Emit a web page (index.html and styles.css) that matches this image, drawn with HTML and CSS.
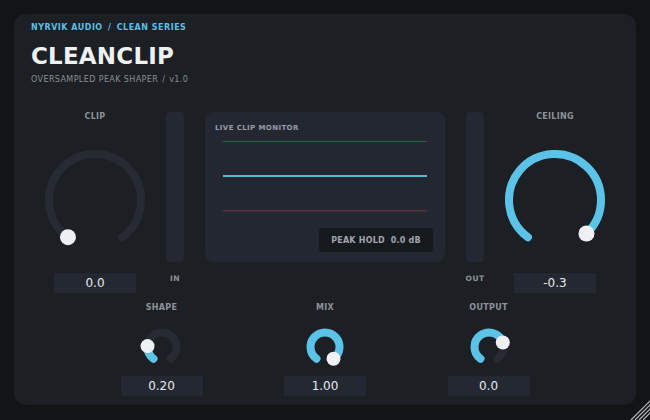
FILE: index.html
```html
<!DOCTYPE html>
<html>
<head>
<meta charset="utf-8">
<link rel="stylesheet" href="styles.css">
</head>
<body>
<div class="panel">
  <header class="head">
    <div class="brand">NYRVIK AUDIO <span class="sep">/</span> CLEAN SERIES</div>
    <h1 class="title">CLEANCLIP</h1>
    <div class="subtitle">OVERSAMPLED PEAK SHAPER <span class="sep2">/</span> v1.0</div>
  </header>

  <section class="top-row">
    <div class="knob-col">
      <div class="label">CLIP</div>
      <svg class="knob-big" width="100" height="100" viewBox="0 0 100 100">
        <path class="track" d="M22.96 87.21 A46 46 0 1 1 77.04 87.21" stroke-width="8"/>
        <circle class="dot" cx="22.96" cy="87.21" r="8"/>
      </svg>
      <div class="value">0.0</div>
    </div>

    <div class="meter-col">
      <div class="meter"></div>
      <div class="meter-label">IN</div>
    </div>

    <div class="monitor">
      <div class="mon-label">LIVE CLIP MONITOR</div>
      <svg class="scope" width="204" height="80" viewBox="0 0 204 80">
        <line class="limit" x1="0" y1="5.5" x2="204" y2="5.5"/>
        <line class="signal" x1="0" y1="40" x2="204" y2="40"/>
        <line class="limit" x1="0" y1="74.8" x2="204" y2="74.8"/>
      </svg>
      <div class="peak">PEAK HOLD<span class="peak-val">0.0 dB</span></div>
    </div>

    <div class="meter-col">
      <div class="meter"></div>
      <div class="meter-label">OUT</div>
    </div>

    <div class="knob-col">
      <div class="label">CEILING</div>
      <svg class="knob-big" width="100" height="100" viewBox="0 0 100 100">
        <path class="track" d="M22.96 87.21 A46 46 0 1 1 77.04 87.21" stroke-width="8"/>
        <path class="active" d="M22.96 87.21 A46 46 0 1 1 81.49 83.53" stroke-width="8"/>
        <circle class="dot" cx="81.49" cy="83.53" r="8"/>
      </svg>
      <div class="value">-0.3</div>
    </div>
  </section>

  <section class="bottom-row">
    <div class="knob-col small">
      <div class="label">SHAPE</div>
      <svg class="knob-small" width="48" height="48" viewBox="0 0 48 48">
        <path class="track" d="M15.48 35.73 A14.5 14.5 0 1 1 32.52 35.73" stroke-width="8"/>
        <path class="active" d="M15.48 35.73 A14.5 14.5 0 0 1 9.53 23.09" stroke-width="8"/>
        <circle class="dot" cx="9.53" cy="23.09" r="7"/>
      </svg>
      <div class="value">0.20</div>
    </div>
    <div class="knob-col small">
      <div class="label">MIX</div>
      <svg class="knob-small" width="48" height="48" viewBox="0 0 48 48">
        <path class="active" d="M15.48 35.73 A14.5 14.5 0 1 1 32.52 35.73" stroke-width="8"/>
        <circle class="dot" cx="32.52" cy="35.73" r="7"/>
      </svg>
      <div class="value">1.00</div>
    </div>
    <div class="knob-col small">
      <div class="label">OUTPUT</div>
      <svg class="knob-small" width="48" height="48" viewBox="0 0 48 48">
        <path class="track" d="M15.48 35.73 A14.5 14.5 0 1 1 32.52 35.73" stroke-width="8"/>
        <path class="active" d="M15.48 35.73 A14.5 14.5 0 1 1 37.79 19.52" stroke-width="8"/>
        <circle class="dot" cx="37.79" cy="19.52" r="7"/>
      </svg>
      <div class="value">0.0</div>
    </div>
  </section>
</div>

<svg class="grip" width="20" height="20" viewBox="0 0 20 20">
  <line x1="1" y1="20" x2="21" y2="0"/>
  <line x1="5" y1="20" x2="21" y2="4"/>
  <line x1="9" y1="20" x2="21" y2="8"/>
  <line x1="13" y1="20" x2="21" y2="12"/>
</svg>
</body>
</html>
```

FILE: styles.css
```css
html, body {
  margin: 0;
  padding: 0;
}
body {
  background: #131416;
  width: 650px;
  height: 420px;
  overflow: hidden;
  position: relative;
  font-family: "DejaVu Sans", Verdana, sans-serif;
}
.panel {
  margin: 14px;
  width: 622px;
  height: 391px;
  box-sizing: border-box;
  padding: 9px 17px 0;
  background: #1c1f23;
  border-radius: 12px;
  display: flex;
  flex-direction: column;
}
.head {
  display: flex;
  flex-direction: column;
}
.brand {
  font-size: 8px;
  line-height: 10px;
  font-weight: bold;
  letter-spacing: 0.5px;
  color: #5bbfe6;
}
.sep {
  margin: 0 2px;
}
.title {
  margin: 8.5px 0 0;
  font-size: 23px;
  line-height: 28px;
  font-weight: bold;
  color: #eef0f2;
  letter-spacing: 0.2px;
}
.subtitle {
  margin-top: 5.8px;
  font-size: 8px;
  line-height: 10px;
  letter-spacing: 0.4px;
  color: #8a9098;
}
.sep2 {
  margin: 0 1px;
}
.top-row {
  margin-top: 25px;
  display: grid;
  grid-template-columns: 100px 18px 240px 18px 100px;
  column-gap: 21px;
  justify-content: center;
  align-items: start;
}
.knob-col {
  display: flex;
  flex-direction: column;
  align-items: center;
}
.label {
  padding-top: 2px;
  font-size: 8px;
  line-height: 10px;
  font-weight: bold;
  letter-spacing: 0.3px;
  color: #8d939b;
}
.knob-big {
  display: block;
  margin-top: 27.7px;
  overflow: visible;
}
.track {
  fill: none;
  stroke: #262a33;
  stroke-linecap: round;
}
.active {
  fill: none;
  stroke: #5cc3e8;
  stroke-linecap: round;
}
.dot {
  fill: #eef1f3;
}
.value {
  width: 82px;
  height: 20px;
  background: #242832;
  color: #e8eaec;
  font-size: 12px;
  line-height: 21px;
  text-align: center;
  overflow: hidden;
}
.knob-big + .value {
  margin-top: 23px;
}
.meter-col {
  display: flex;
  flex-direction: column;
  align-items: center;
}
.meter {
  margin-top: 1.7px;
  width: 18px;
  height: 150px;
  border-radius: 4px;
  background: #242832;
}
.meter-label {
  margin-top: 12px;
  font-size: 7.5px;
  line-height: 10px;
  font-weight: bold;
  letter-spacing: 0.4px;
  color: #8d939b;
}
.monitor {
  margin-top: 1.7px;
  height: 150px;
  box-sizing: border-box;
  padding: 12px 12px 10px 10px;
  background: #222731;
  border-radius: 8px;
  display: flex;
  flex-direction: column;
}
.mon-label {
  font-size: 7px;
  line-height: 9px;
  font-weight: bold;
  letter-spacing: 0.4px;
  color: #979da5;
}
.scope {
  display: block;
  margin: 3px 0 0 8px;
}
.limit {
  stroke: #74393f;
  stroke-width: 1;
}
.signal {
  stroke: #5ab9dd;
  stroke-width: 2;
}
.peak {
  margin-top: 12px;
  align-self: flex-end;
  width: 114px;
  height: 24px;
  border-radius: 4px;
  background: #16191d;
  color: #a0a6ae;
  font-size: 8px;
  line-height: 25px;
  font-weight: bold;
  letter-spacing: 0.2px;
  text-align: center;
  overflow: hidden;
}
.peak-val {
  margin-left: 6px;
}
.bottom-row {
  margin-top: 7.7px;
  display: flex;
  justify-content: center;
  gap: 81.5px;
}
.knob-col.small {
  width: 82px;
}
.knob-small {
  display: block;
  margin-top: 10.6px;
  overflow: visible;
}
.knob-small + .value {
  margin-top: 4.7px;
}
.grip {
  position: absolute;
  right: 0;
  bottom: 0;
  overflow: hidden;
}
.grip line {
  stroke: #b9bdc2;
  stroke-width: 1.2;
}
```
